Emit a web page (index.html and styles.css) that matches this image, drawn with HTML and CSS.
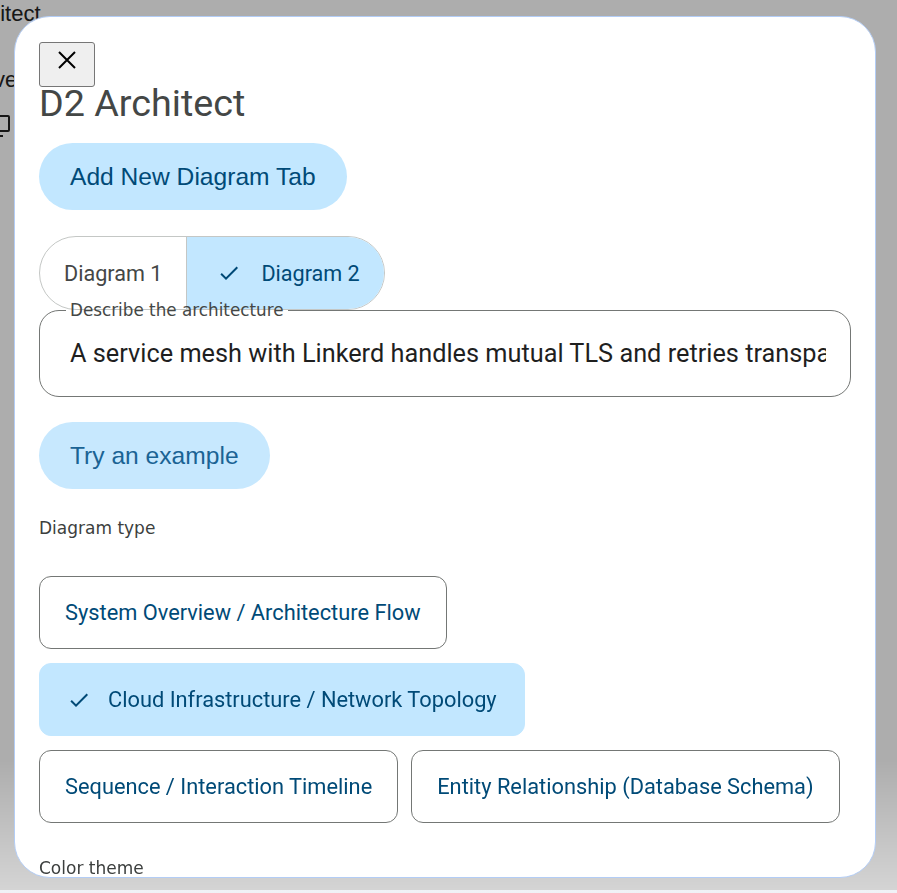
FILE: index.html
```html
<!DOCTYPE html>
<html lang="en">
<head>
  <meta charset="UTF-8">
  <title>D2 Architect</title>
  <meta name="viewport" content="width=device-width, initial-scale=1.0">
  <link rel="stylesheet" href="styles.css">
</head>
<body>
  <div class="page">
    <p class="page-title">Architect</p>
    <p class="page-line">Archive</p>
    <svg class="page-icon" width="22" height="24" viewBox="0 0 22 24" fill="none" stroke="#222" stroke-width="2">
      <rect x="1" y="2" width="20" height="15" rx="1"/>
      <path d="M7 22h8M11 17v5"/>
    </svg>
  </div>

  <div class="backdrop"></div>

  <div class="dialog">
    <button class="close" aria-label="Close">
      <svg width="18" height="18" viewBox="0 0 18 18" stroke="#000" stroke-width="2">
        <path d="M1 1l16 16M17 1L1 17"/>
      </svg>
    </button>
    <h1>D2 Architect</h1>

    <button class="tonal">Add New Diagram Tab</button>

    <div class="segments">
      <button class="seg">Diagram 1</button>
      <button class="seg on">
        <svg class="check" width="24" height="24" viewBox="0 0 24 24"><path d="M9 16.17L4.83 12l-1.42 1.41L9 19 21 7l-1.41-1.41z"/></svg>
        Diagram 2
      </button>
    </div>

    <fieldset class="field">
      <legend>Describe the architecture</legend>
      <input value="A service mesh with Linkerd handles mutual TLS and retries transparently between services">
    </fieldset>

    <button class="tonal soft">Try an example</button>

    <div class="label">Diagram type</div>
    <div class="chips">
      <button class="chip">System Overview / Architecture Flow</button>
      <button class="chip on">
        <svg class="check" width="24" height="24" viewBox="0 0 24 24"><path d="M9 16.17L4.83 12l-1.42 1.41L9 19 21 7l-1.41-1.41z"/></svg>
        Cloud Infrastructure / Network Topology
      </button>
      <button class="chip">Sequence / Interaction Timeline</button>
      <button class="chip">Entity Relationship (Database Schema)</button>
    </div>

    <div class="label">Color theme</div>
    <div class="chips">
      <button class="chip on">
        <svg class="check" width="24" height="24" viewBox="0 0 24 24"><path d="M9 16.17L4.83 12l-1.42 1.41L9 19 21 7l-1.41-1.41z"/></svg>
        Neutral
      </button>
      <button class="chip">Colorful</button>
    </div>
  </div>
</body>
</html>
```

FILE: styles.css
```css
body { margin: 0; font-family: Roboto, "Noto Sans", sans-serif; background: #fff; overflow: hidden; }

.page { font-family: "Liberation Sans", Arial, sans-serif; font-size: 22px; color: #222; }
.page-title { margin: 0 0 0 -45px; line-height: 28px; }
.page-line { margin: 38px 0 0 -56px; line-height: 28px; }
.page-icon { display: block; margin: 20px 0 0 -12px; }

.backdrop {
  position: fixed; inset: 0;
  background: linear-gradient(to bottom, rgba(0,0,0,.32) 760px, rgba(0,0,0,.17) 890px, rgba(60,90,150,.08) 890px);
}

.dialog {
  position: fixed; left: 14px; top: 16px;
  width: 862px; height: 862px; box-sizing: border-box;
  padding: 25px 24px;
  background: #fff;
  border: 1px solid #b3cdf6;
  border-radius: 36px;
  overflow: hidden;
}

.close {
  display: flex; align-items: center; justify-content: center;
  width: 56px; height: 45px; padding: 0 0 9px;
  background: #efefef; border: 1px solid #767676; border-radius: 3px;
}

h1 { margin: 0; font-size: 37.7px; line-height: 32px; font-weight: 400; color: #444746; }

.tonal {
  display: block; margin-top: 24px;
  height: 67px; padding: 0 31px;
  font-family: "Liberation Sans", Arial, sans-serif; font-size: 24.6px;
  background: #c2e7ff; color: #004a77;
  border: 0; border-radius: 34px;
}
.tonal.soft { margin-top: 25px; background: #c7e8fe; color: #1a6394; }

.segments {
  display: inline-flex; margin-top: 26px;
  border: 1px solid #c4c7c5; border-radius: 37px; overflow: hidden;
}
.seg {
  display: flex; align-items: center;
  height: 72px; padding: 0 24px;
  font-family: Roboto, sans-serif; font-size: 21.6px;
  background: transparent; color: #444746; border: 0;
}
.seg + .seg { border-left: 1px solid #c4c7c5; }
.seg.on { gap: 20px; padding-left: 30px; background: #c2e7ff; color: #004a77; }
.check { fill: #004a77; flex: none; }

.field {
  margin: -9px 0 0; padding: 0 24px 10px 26px; min-width: 0;
  border: 1px solid #747775; border-radius: 20px;
}
.field legend {
  padding: 0 4px;
  font-family: "DejaVu Sans", sans-serif; font-size: 16.8px; line-height: 19px; color: #444746;
}
.field input {
  display: block; width: 100%; height: 66px; box-sizing: border-box;
  padding: 0 0 0 4px; border: 0; outline: none; background: transparent;
  font-family: Roboto, sans-serif; font-size: 25.3px; color: #1f1f1f;
}

.label {
  margin: 30px 0 38px;
  font-family: "DejaVu Sans", sans-serif; font-size: 17px; line-height: 19px; color: #3c3f3e;
}

.chips { display: flex; flex-wrap: wrap; gap: 14px 13px; margin-bottom: 36px; }
.chip {
  display: flex; align-items: center;
  height: 73px; padding: 0 25px 0 25px;
  font-family: Roboto, sans-serif; font-size: 21.8px;
  background: #fff; color: #004a77;
  border: 1px solid #747775; border-radius: 12px;
}
.chip.on { gap: 17px; padding-left: 27px; padding-right: 27px; background: #c2e7ff; border-color: #c2e7ff; }
```
